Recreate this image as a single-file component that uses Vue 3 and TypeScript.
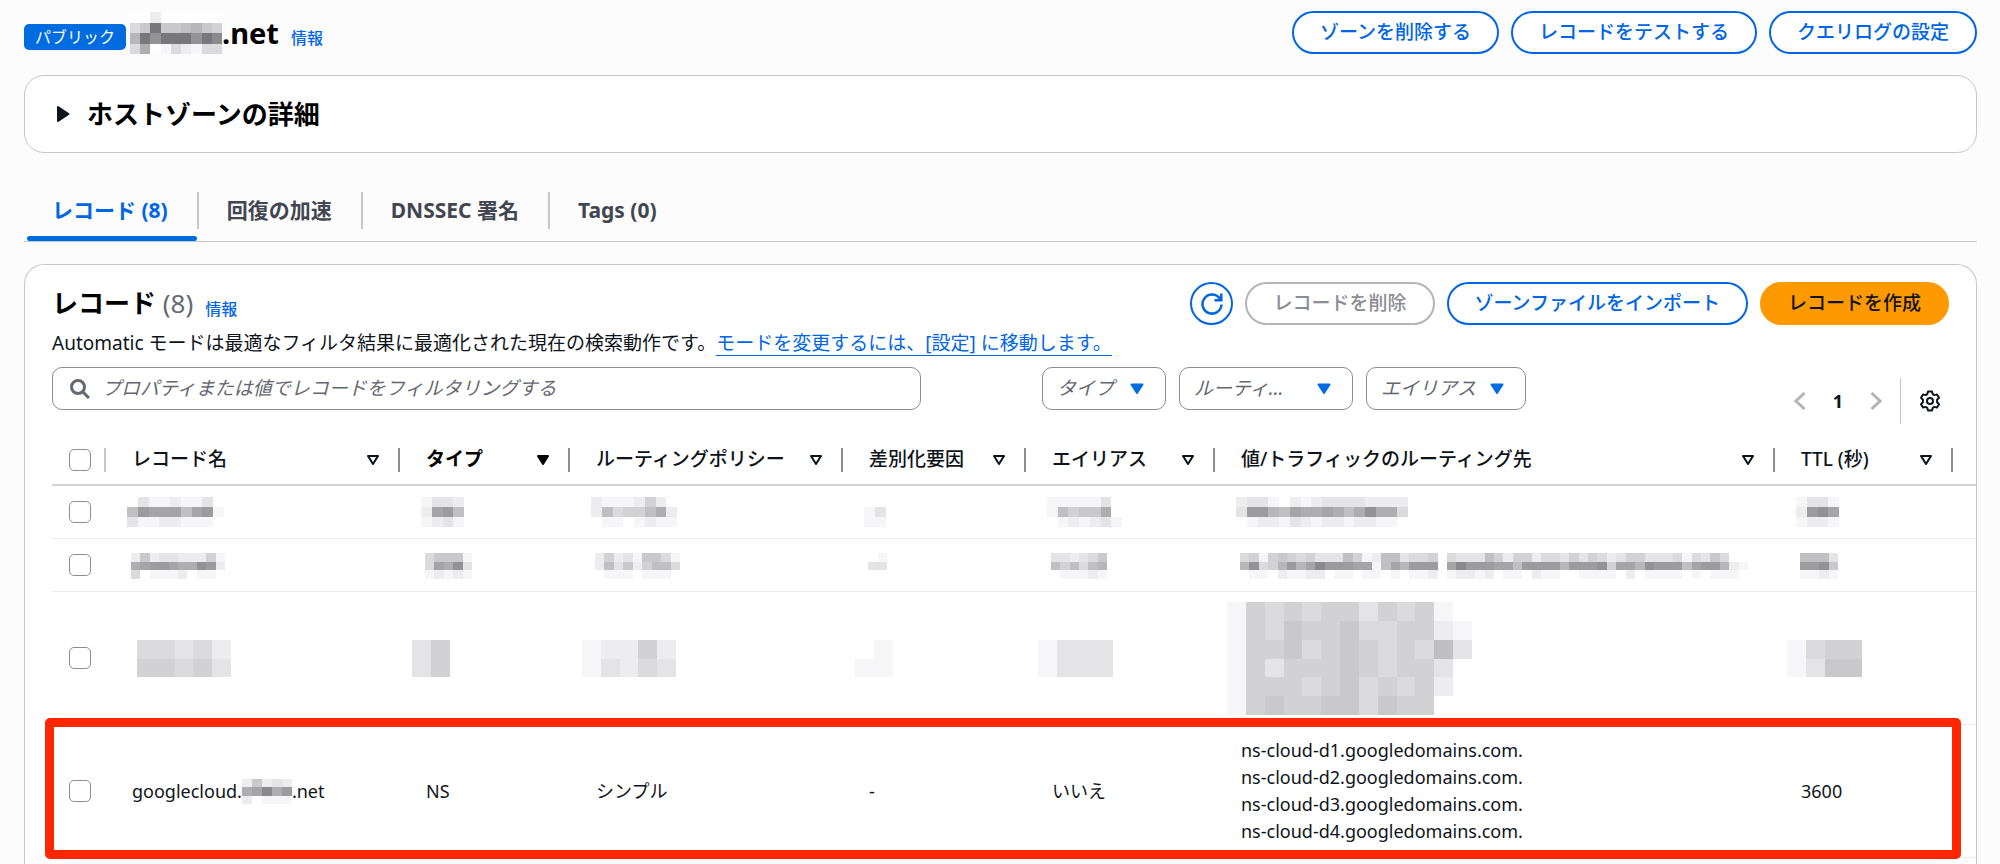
<script setup lang="ts">
import { ref } from 'vue'

interface Mosaic {
  w: number
  h: number
  rows: string[]
}

interface Column {
  key: string
  label: string
  sorted?: boolean
}

interface MaskedRow {
  id: string
  kind: string
  cells: Mosaic[]
}

const columns: Column[] = [
  { key: 'name', label: 'レコード名' },
  { key: 'type', label: 'タイプ', sorted: true },
  { key: 'policy', label: 'ルーティングポリシー' },
  { key: 'diff', label: '差別化要因' },
  { key: 'alias', label: 'エイリアス' },
  { key: 'value', label: '値/トラフィックのルーティング先' },
  { key: 'ttl', label: 'TTL (秒)' },
]

const tabs = ['レコード (8)', '回復の加速', 'DNSSEC 署名', 'Tags (0)']
const activeTab = ref(0)
const query = ref('')

const filters = [
  { id: 'type', label: 'タイプ' },
  { id: 'routing', label: 'ルーティ...' },
  { id: 'alias', label: 'エイリアス' },
]

const nameServers = [1, 2, 3, 4].map((n) => `ns-cloud-d${n}.googledomains.com.`)

// Each hex digit is the darkness of one tile of a masked value.
const zoneMask: Mosaic = {
  w: 92,
  h: 42,
  rows: ['002000000', '46f667865', '8fcfffcfd', '490142144'],
}
const hostMask: Mosaic = { w: 50, h: 25, rows: ['26232', '9ad9b', '20111'] }

const maskedRows: MaskedRow[] = [
  {
    id: 'r1',
    kind: 'first',
    cells: [
      { w: 97, h: 30, rows: ['031121130', '7baaa7ab1', '311221110'] },
      { w: 43, h: 30, rows: ['1332', '2ab7', '1231'] },
      { w: 86, h: 30, rows: ['21112520', '27455792', '01101211'] },
      { w: 22, h: 30, rows: ['00', '13', '11'] },
      { w: 75, h: 30, rows: ['1111130', '1756690', '0121231'] },
      { w: 172, h: 30, rows: ['2331021233332222', '3bb87a99a979c994', '0122132122122110'] },
      { w: 43, h: 30, rows: ['1331', '2bca', '1221'] },
    ],
  },
  {
    id: 'r2',
    kind: 'second',
    cells: [
      { w: 94, h: 26, rows: ['2623322251', '9abba99cb2', '4011120110'] },
      { w: 47, h: 26, rows: ['46661', '4a9c3', '12121'] },
      { w: 85, h: 26, rows: ['252316641', '273625774', '011101110'] },
      { w: 19, h: 26, rows: ['01', '33', '00'] },
      { w: 56, h: 26, rows: ['332346', '757478', '011121'] },
      {
        w: 508,
        h: 26,
        rows: [
          '451565453337512773445043337525524435354235533341436400',
          '8c458b8adbbbaa17a8bbb0adbbbaa7bbbb8bbbc5aa8cbbb7abb821',
          '011021122011011010112012212011021100111102011110101110',
        ],
      },
      { w: 38, h: 26, rows: ['7773', 'bbc6', '1121'] },
    ],
  },
  {
    id: 'r3',
    kind: 'third',
    cells: [
      { w: 113, h: 37, rows: ['044342', '055453'] },
      { w: 38, h: 37, rows: ['35', '35'] },
      { w: 94, h: 37, rows: ['12252', '13243'] },
      { w: 38, h: 37, rows: ['01', '11'] },
      { w: 75, h: 37, rows: ['1333', '1333'] },
      {
        w: 245,
        h: 113,
        rows: ['1545455354510', '1546556445521', '1556456545473', '1535556545530', '1555456454520', '1565566465500'],
      },
      { w: 75, h: 37, rows: ['1455', '1366'] },
    ],
  },
]

function tiles(m: Mosaic) {
  return m.rows.flatMap((row, y) =>
    [...row]
      .map((c, x) => ({ x, y, level: parseInt(c, 16) }))
      .filter((t) => t.level > 0)
      .map((t) => {
        const v = 255 - t.level * 9
        return { x: t.x, y: t.y, fill: `rgb(${v},${v},${v + 2 > 255 ? 255 : v + 2})` }
      }),
  )
}
</script>

<template>
  <main class="page">
    <header class="zone">
      <div class="zone-title">
        <span class="badge">パブリック</span>
        <h1>
          <svg
            :width="zoneMask.w"
            :height="zoneMask.h"
            :viewBox="`0 0 ${zoneMask.rows[0].length} ${zoneMask.rows.length}`"
            preserveAspectRatio="none"
            shape-rendering="crispEdges"
            aria-hidden="true"
          >
            <rect width="100%" height="100%" fill="#fff" />
            <rect v-for="(t, i) in tiles(zoneMask)" :key="i" :x="t.x" :y="t.y" width="1" height="1" :fill="t.fill" />
          </svg>.net
        </h1>
        <a class="info" href="#zone-info">情報</a>
      </div>
      <div class="actions">
        <button type="button" class="btn">ゾーンを削除する</button>
        <button type="button" class="btn">レコードをテストする</button>
        <button type="button" class="btn">クエリログの設定</button>
      </div>
    </header>

    <section class="card details">
      <button type="button" class="expander" aria-expanded="false">
        <svg width="14" height="18" viewBox="0 0 14 18" aria-hidden="true">
          <path d="M2 2v14l10.500-7z" fill="#0f141a" stroke="#0f141a" stroke-width="2" stroke-linejoin="round" />
        </svg>
        <span>ホストゾーンの詳細</span>
      </button>
    </section>

    <nav class="tabs" role="tablist">
      <button
        v-for="(t, i) in tabs"
        :key="t"
        type="button"
        role="tab"
        class="tab"
        :class="{ active: i === activeTab }"
        :aria-selected="i === activeTab"
        @click="activeTab = i"
      >
        <span>{{ t }}</span>
      </button>
    </nav>

    <section class="card records">
      <div class="records-head">
        <h2>レコード <span class="count">(8)</span></h2>
        <a class="info" href="#records-info">情報</a>
        <div class="actions push">
          <button type="button" class="btn round" aria-label="更新">
            <svg width="24" height="24" viewBox="0 0 24 24" fill="none" stroke="currentColor" stroke-width="2.500" aria-hidden="true">
              <path d="M21.500 12.500a9.500 9.500 0 1 1-1.800-6l1.300 1.700" />
              <path d="M21.300 1.500v6.800H14.500" />
            </svg>
          </button>
          <button type="button" class="btn" disabled>レコードを削除</button>
          <button type="button" class="btn">ゾーンファイルをインポート</button>
          <button type="button" class="btn primary">レコードを作成</button>
        </div>
      </div>

      <p class="desc">
        <span>Automatic モードは最適なフィルタ結果に最適化された現在の検索動作です。</span><a href="#settings">モードを変更するには、[設定] に移動します。</a>
      </p>

      <div class="toolbar">
        <label class="search">
          <svg width="20" height="20" viewBox="0 0 20 20" fill="none" stroke="#656871" stroke-width="3" aria-hidden="true">
            <circle cx="8" cy="8" r="6.500" />
            <path d="M12.500 12.500l6.500 6.500" />
          </svg>
          <input
            v-model="query"
            type="text"
            placeholder="プロパティまたは値でレコードをフィルタリングする"
            aria-label="プロパティまたは値でレコードをフィルタリングする"
          />
        </label>
        <div class="filters">
          <label v-for="f in filters" :key="f.id" class="filter" :class="f.id">
            <select :aria-label="f.label">
              <option>{{ f.label }}</option>
            </select>
            <svg width="14" height="12" viewBox="0 0 14 12" aria-hidden="true">
              <path d="M1.500 1.500h11L7 10z" fill="#006ce0" stroke="#006ce0" stroke-width="2" stroke-linejoin="round" />
            </svg>
          </label>
        </div>
        <div class="pager">
          <button type="button" class="icon" aria-label="前のページ">
            <svg width="12" height="18" viewBox="0 0 12 18" fill="none" stroke="#b4b4bb" stroke-width="3"><path d="M10.500 1L2 9l8.500 8" /></svg>
          </button>
          <button type="button" class="icon current">1</button>
          <button type="button" class="icon" aria-label="次のページ">
            <svg width="12" height="18" viewBox="0 0 12 18" fill="none" stroke="#b4b4bb" stroke-width="3"><path d="M1.500 1L10 9l-8.500 8" /></svg>
          </button>
          <span class="rule"></span>
          <button type="button" class="icon" aria-label="設定">
            <svg width="22" height="22" viewBox="0 0 22 22" fill="none" stroke="#0f141a" stroke-width="2" stroke-linejoin="round">
              <path
                d="M9 1.500h4l.7 2.600 1.700 1 2.600-.7 2 3.400-1.900 1.900v2.600l1.900 1.900-2 3.400-2.600-.7-1.700 1-.7 2.600H9l-.7-2.600-1.700-1-2.600.7-2-3.400 1.900-1.900V9.700L2 7.800l2-3.400 2.600.7 1.700-1z"
              />
              <circle cx="11" cy="11" r="3" />
            </svg>
          </button>
        </div>
      </div>

      <table>
        <colgroup>
          <col class="c-check" />
          <col v-for="c in columns" :key="c.key" :class="`c-${c.key}`" />
        </colgroup>
        <thead>
          <tr>
            <th class="check"><div class="head light"><input type="checkbox" aria-label="すべて選択" /></div></th>
            <th v-for="c in columns" :key="c.key" scope="col">
              <div class="head" :class="{ sorted: c.sorted }">
                <span>{{ c.label }}</span>
                <svg width="14" height="12" viewBox="0 0 14 12" aria-hidden="true">
                  <path
                    d="M2 2h10L7 10z"
                    :fill="c.sorted ? 'currentColor' : 'none'"
                    stroke="currentColor"
                    stroke-width="2"
                    stroke-linejoin="round"
                  />
                </svg>
              </div>
            </th>
          </tr>
        </thead>
        <tbody>
          <tr v-for="r in maskedRows" :key="r.id" :class="r.kind">
            <td class="check"><input type="checkbox" aria-label="レコードを選択" /></td>
            <td v-for="(m, i) in r.cells" :key="i">
              <svg
                class="mask"
                :width="m.w"
                :height="m.h"
                :viewBox="`0 0 ${m.rows[0].length} ${m.rows.length}`"
                preserveAspectRatio="none"
                shape-rendering="crispEdges"
                aria-hidden="true"
              >
                <rect v-for="(t, k) in tiles(m)" :key="k" :x="t.x" :y="t.y" width="1" height="1" :fill="t.fill" />
              </svg>
            </td>
          </tr>
          <tr class="marked">
            <td class="check">
              <input type="checkbox" aria-label="googlecloud を選択" />
              <span class="marker" aria-hidden="true"></span>
            </td>
            <td>
              <span class="host">
                <span>googlecloud.</span>
                <svg
                  :width="hostMask.w"
                  :height="hostMask.h"
                  :viewBox="`0 0 ${hostMask.rows[0].length} ${hostMask.rows.length}`"
                  preserveAspectRatio="none"
                  shape-rendering="crispEdges"
                  aria-hidden="true"
                >
                  <rect v-for="(t, k) in tiles(hostMask)" :key="k" :x="t.x" :y="t.y" width="1" height="1" :fill="t.fill" />
                </svg>
                <span>.net</span>
              </span>
            </td>
            <td>NS</td>
            <td>シンプル</td>
            <td>-</td>
            <td>いいえ</td>
            <td><div v-for="ns in nameServers" :key="ns">{{ ns }}</div></td>
            <td>3600</td>
          </tr>
        </tbody>
      </table>
    </section>
  </main>
</template>

<style>
body {
  margin: 0;
  background: #fcfcfd;
}
</style>

<style scoped>
.page {
  box-sizing: border-box;
  min-height: 100vh;
  padding: 11px 23px 0 24px;
  display: flex;
  flex-direction: column;
  color: #0f141a;
  font: 18px/27px 'Noto Sans', 'Noto Sans CJK JP', sans-serif;
}
button,
input,
select {
  font: inherit;
  color: inherit;
}
button {
  cursor: pointer;
}
svg {
  display: block;
  flex: none;
}
h1,
h2,
p {
  margin: 0;
}
a {
  color: #0066e5;
  text-decoration: none;
}

.zone,
.zone-title,
.actions {
  display: flex;
  align-items: center;
}
.zone {
  justify-content: space-between;
  min-height: 42px;
}
.badge {
  padding: 0 11px;
  margin: 8px 4px 0 0;
  border-radius: 5px;
  background: #006ce0;
  color: #fff;
  font-size: 16px;
  line-height: 26px;
}
h1 {
  display: flex;
  align-items: center;
  color: #000;
  font-size: 29px;
  line-height: 42px;
}
.info {
  margin: 10px 0 0 12px;
  font-size: 16px;
  line-height: 24px;
  font-weight: 500;
}
.actions {
  gap: 12px;
}
.btn {
  box-sizing: border-box;
  height: 43px;
  padding: 0 26px;
  border: 2px solid #0066e5;
  border-radius: 22px;
  background: #fff;
  color: #0066e5;
  font-size: 19px;
  font-weight: 500;
  white-space: nowrap;
}
.btn:disabled {
  border-color: #b4b4bb;
  color: #8c8c94;
}
.btn.primary {
  border-color: #ff9900;
  background: #ff9900;
  color: #0f141a;
}
.btn.round {
  width: 43px;
  padding: 0;
  display: grid;
  place-items: center;
}

.card {
  border: 1px solid #c6c6cd;
  border-radius: 20px;
  background: #fff;
}
.details {
  margin-top: 21px;
}
.expander {
  display: flex;
  align-items: center;
  gap: 17px;
  width: 100%;
  height: 76px;
  padding: 0 31px;
  border: 0;
  background: none;
  color: #000;
  font-size: 26px;
  font-weight: 700;
  line-height: 36px;
}

.tabs {
  display: flex;
  margin-top: 39px;
  border-bottom: 1px solid #c6c6cd;
}
.tab {
  position: relative;
  padding: 0 0 12px;
  border: 0;
  background: none;
  font-size: 21px;
  line-height: 37px;
  font-weight: 700;
  color: #424650;
}
.tab span {
  display: block;
  padding: 0 29px 0 28px;
  border-right: 2px solid #c6c6cd;
}
.tab:last-child span {
  border-right: 0;
}
.tab.active {
  color: #0066e5;
}
.tab.active::after {
  content: '';
  position: absolute;
  left: 3px;
  right: 2px;
  bottom: 0;
  height: 5px;
  border-radius: 3px;
  background: #006ce0;
}

.records {
  flex: 1;
  margin-top: 22px;
  padding: 17px 27px 0;
  border-bottom: 0;
  border-radius: 20px 20px 0 0;
}
.records-head {
  display: flex;
  align-items: center;
}
h2 {
  color: #000;
  font-size: 26px;
  line-height: 43px;
}
.count {
  color: #656871;
  font-weight: 400;
}
.push {
  margin-left: auto;
}
.desc {
  margin-top: 6px;
  font-size: 19px;
  line-height: 24px;
}
.desc a {
  display: inline-block;
  border-bottom: 1px solid #0066e5;
}

.toolbar {
  display: flex;
  align-items: flex-start;
  margin-top: 11px;
}
.search,
.filter select {
  box-sizing: border-box;
  height: 43px;
  border: 1px solid #8c8c94;
  border-radius: 10px;
  background: #fff;
  font-size: 19px;
}
.search {
  display: flex;
  align-items: center;
  gap: 12px;
  flex: 0 1 869px;
  padding: 0 17px;
}
.search input {
  flex: 1;
  min-width: 0;
  padding: 0;
  border: 0;
  outline: 0;
  background: none;
}
.search input::placeholder {
  color: #656871;
  font-style: italic;
  opacity: 1;
}
.filters {
  display: flex;
  gap: 13px;
  margin-left: 121px;
}
.filter {
  position: relative;
}
.filter select {
  appearance: none;
  width: 100%;
  padding: 0 30px 0 14px;
  color: #656871;
  font-style: italic;
}
.filter svg {
  position: absolute;
  right: 22px;
  top: 16px;
  pointer-events: none;
}
.filter.type {
  width: 124px;
}
.filter.routing {
  width: 174px;
}
.filter.alias {
  width: 160px;
}
.pager {
  display: flex;
  align-items: center;
  height: 46px;
  margin: 11px 8px 0 auto;
}
.icon {
  display: grid;
  place-items: center;
  padding: 0;
  border: 0;
  background: none;
}
.current {
  width: 64px;
  font-weight: 700;
}
.rule {
  width: 1px;
  height: 46px;
  margin: 0 18px;
  background: #c6c6cd;
}

table {
  width: calc(100% + 27px);
  margin-top: 11px;
  border-collapse: separate;
  border-spacing: 0;
  table-layout: fixed;
}
.c-check {
  width: 54px;
}
.c-name {
  width: 294px;
}
.c-type {
  width: 170px;
}
.c-policy {
  width: 273px;
}
.c-diff {
  width: 183px;
}
.c-alias {
  width: 189px;
}
.c-ttl {
  width: 201px;
}
th {
  height: 49px;
  padding: 0;
  border-bottom: 2px solid #d4d4d8;
  text-align: left;
  font-size: 19px;
  font-weight: 500;
  white-space: nowrap;
}
th:last-child {
  padding-right: 23px;
}
.head {
  display: flex;
  align-items: center;
  justify-content: space-between;
  height: 24px;
  padding: 0 18px 0 26px;
  border-right: 2px solid #8c8c94;
}
.head.light {
  padding: 0 0 0 17px;
  border-color: #c6c6cd;
}
.head.sorted {
  color: #000;
  font-weight: 700;
}
td {
  box-sizing: border-box;
  height: 53px;
  padding: 0 0 0 26px;
  border-bottom: 1px solid #ebebf0;
  vertical-align: middle;
}
td.check {
  padding-left: 17px;
}
input[type='checkbox'] {
  display: block;
  appearance: none;
  box-sizing: border-box;
  width: 22px;
  height: 22px;
  margin: 0;
  border: 1px solid #8c8c94;
  border-radius: 5px;
  background: #fff;
}
.mask {
  margin-left: -5px;
}
.second .mask {
  margin: 2px 0 0 -1px;
}
.third .mask {
  margin-left: -14px;
}
.third td,
.marked td {
  height: 133px;
}
.marked {
  position: relative;
}
.marker {
  position: absolute;
  inset: -7px 15px -1px -7px;
  border: 9px solid #ff2600;
  border-radius: 5px;
  pointer-events: none;
}
.host {
  display: flex;
  align-items: center;
}
</style>
